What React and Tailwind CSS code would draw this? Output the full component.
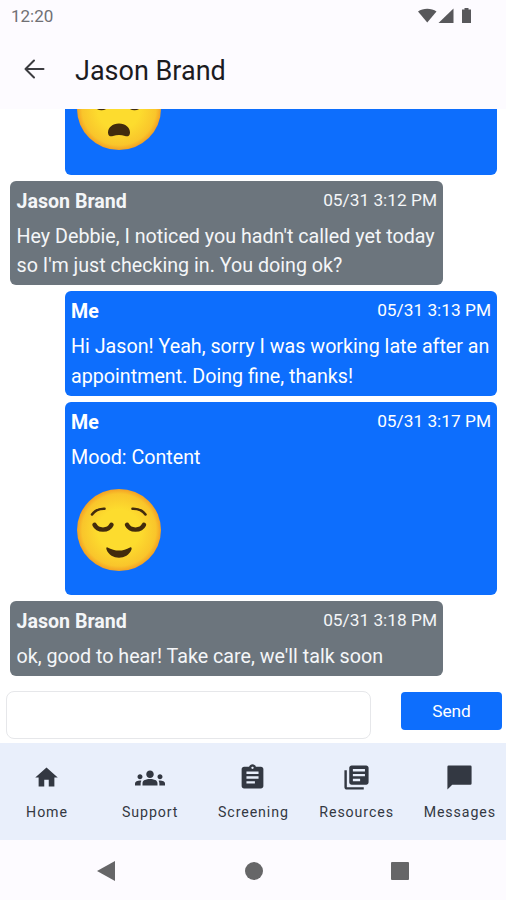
import React from 'react'
import { MdHome, MdGroups, MdAssignment, MdLibraryBooks } from 'react-icons/md'

const MESSAGES = [
  { id: 2, from: 'Jason Brand', time: '05/31 3:12 PM', lines: ["Hey Debbie, I noticed you hadn't called yet today", "so I'm just checking in. You doing ok?"] },
  { id: 3, from: 'Me', time: '05/31 3:13 PM', lines: ['Hi Jason! Yeah, sorry I was working late after an', 'appointment. Doing fine, thanks!'] },
  { id: 4, from: 'Me', time: '05/31 3:17 PM', lines: ['Mood: Content'], mood: true },
  { id: 5, from: 'Jason Brand', time: '05/31 3:18 PM', lines: ["ok, good to hear! Take care, we'll talk soon"] }
]

// Speech bubble with tight corners
function ChatIcon({ className }) {
  return (
    <svg className={className} viewBox="0 0 24 24" fill="currentColor">
      <path d="M3 2h18a1 1 0 0 1 1 1v14a1 1 0 0 1-1 1H6l-4 4V3a1 1 0 0 1 1-1z" />
    </svg>
  )
}

const TABS = [
  { label: 'Home', Icon: MdHome, size: 'size-[27px]' },
  { label: 'Support', Icon: MdGroups, size: 'size-[30px]' },
  { label: 'Screening', Icon: MdAssignment, size: 'size-[29px]' },
  { label: 'Resources', Icon: MdLibraryBooks, size: 'size-[29px]' },
  { label: 'Messages', Icon: ChatIcon, size: 'size-[29px]' }
]

// Shared shading for the emoji faces
function FaceGradient({ id }) {
  return (
    <defs>
      <radialGradient id={id} cx="50%" cy="50%" r="50%">
        <stop offset="0.5" stopColor="#fddc2e" />
        <stop offset="0.88" stopColor="#f9c52b" />
        <stop offset="1" stopColor="#f3a024" />
      </radialGradient>
    </defs>
  )
}

function ContentFace() {
  return (
    <svg className="h-[84px] w-[86px] shrink-0" viewBox="0 0 86 84" fill="none">
      <FaceGradient id="content-face" />
      <ellipse cx="43" cy="42" rx="42" ry="41" fill="url(#content-face)" />
      <g stroke="#422b0d" strokeLinecap="round">
        <path d="M16 26.5C19 22.5 23 20.6 28.5 20.8" strokeWidth="2.6" />
        <path d="M56.5 20.8C62 20.6 66.5 22.5 69.5 26.5" strokeWidth="2.6" />
        <path d="M18.5 36.8C21.5 43.2 32.5 43.2 35.5 36.8" strokeWidth="4.4" />
        <path d="M51 36.8C54 43.2 65 43.2 68 36.8" strokeWidth="4.4" />
      </g>
      <path d="M31.5 59.5C39 63.6 47 63.6 54 59.5C55.3 59 56 60 55.5 61.5C51.5 72.5 34.5 72.5 30.5 61.5C30 60 30.5 59 31.5 59.5Z" fill="#422b0d" />
    </svg>
  )
}

function SadFace() {
  return (
    <svg className="h-[84px] w-[86px] shrink-0" viewBox="0 0 86 84" fill="none">
      <FaceGradient id="sad-face" />
      <ellipse cx="43" cy="42" rx="42" ry="41" fill="url(#sad-face)" />
      <g stroke="#422b0d" strokeLinecap="round" strokeWidth="4">
        <path d="M19 37C22 42.6 29 42.6 32 37" />
        <path d="M52 37C55 42.6 62 42.6 65 37" />
      </g>
      <path d="M43 56.5C36.5 56.5 32 60.5 32 65.5C32 69 34.500 70 37 69C41 67.800 45 67.800 49 69C51.500 70 54 69 54 65.500C54 60.500 49.500 56.500 43 56.500Z" fill="#422b0d" />
    </svg>
  )
}

function StatusBar() {
  return (
    <div className="flex h-8 shrink-0 items-center justify-between pl-[11px] pr-[33px] text-[#707074]">
      <span className="pt-px text-[17px]">12:20</span>
      <svg className="h-4 w-[55px]" viewBox="0 0 55 16" fill="#58585b">
        <path d="M0 3.5C5 -0.3 13.5 -0.3 18.5 3.5L9.25 14.5Z" />
        <path d="M35.5 0.5V15H20.5Z" />
        <path d="M46.5 0h4v1.5h2.5v13.5h-9v-13.5h2.5z" />
      </svg>
    </div>
  )
}

function Header() {
  return (
    <header className="flex h-[77px] shrink-0 items-center pb-1">
      <svg className="ml-6 h-5 w-[21px]" viewBox="0 0 21 20" fill="none" stroke="#3c3c40" strokeWidth="2" strokeLinecap="round" strokeLinejoin="round">
        <path d="M10 1.5L1.5 10L10 18.5M1.5 10H19.5" />
      </svg>
      <h1 className="ml-[30px] pt-1 text-[27px] leading-8 text-[#1c1b1f]">Jason Brand</h1>
    </header>
  )
}

function Message({ from, time, lines, mood }) {
  const mine = from === 'Me'
  return (
    <div className={mine ? 'ml-[55px] w-[432px] rounded-md bg-[#0d6efd] p-1.5 text-white' : 'w-[433px] rounded-md bg-[#6c757d] p-1.5 pl-[6.5px] text-[#f4f6f8]'}>
      <div className="flex h-[29px] items-start justify-between">
        <span className="text-[19.6px] font-bold leading-[30px]">{from}</span>
        <span className="text-[17.3px] leading-[26px]">{time}</span>
      </div>
      <div className="mt-[5px] whitespace-nowrap text-[19.7px] leading-[29.4px]">
        {lines.map(line => <p key={line} className="relative top-px">{line}</p>)}
      </div>
      {mood && (
        <div className="h-[117px] pl-[5px] pt-4">
          <ContentFace />
        </div>
      )}
    </div>
  )
}

function TabBar() {
  return (
    <nav className="grid h-[97px] w-[516px] shrink-0 grid-cols-5 bg-[#e9effb]">
      {TABS.map(({ label, Icon, size }) => (
        <div key={label} className="flex w-[93px] flex-col items-center pt-5 text-[#333842]">
          <div className="flex h-[29px] items-center">
            <Icon className={size} />
          </div>
          <span className="mt-2.5 pl-px text-[14.2px] leading-5 tracking-[0.9px]">{label}</span>
        </div>
      ))}
    </nav>
  )
}

export default function App() {
  return (
    <div className="flex h-[900px] w-[506px] flex-col overflow-hidden bg-[#fdfbff] font-['Roboto',sans-serif]">
      <StatusBar />
      <Header />
      <main className="flex h-[568px] shrink-0 flex-col gap-1.5 bg-white pl-2.5">
        <div className="ml-[55px] flex h-[65.5px] w-[432px] shrink-0 flex-col justify-end overflow-hidden rounded-b-md bg-[#0d6efd] pb-6 pl-[11px]">
          <SadFace />
        </div>
        {MESSAGES.map(message => <Message key={message.id} {...message} />)}
      </main>
      <form className="flex h-[66px] shrink-0 items-start bg-white pl-1.5 pt-3.5">
        <input className="h-[48px] w-[365px] rounded-lg border border-[#e6e7ea] bg-white px-3 outline-none" />
        <button type="button" className="ml-[30px] mt-px h-[38px] w-[101px] rounded bg-[#0d6efd] pt-px text-[17.3px] text-white">Send</button>
      </form>
      <TabBar />
      <div className="flex h-[60px] items-center pt-px">
        <svg className="ml-[97px] h-5 w-[18px]" viewBox="0 0 18 20" fill="#666668"><path d="M18 0V20L0 10Z" /></svg>
        <div className="ml-[130px] size-[18px] rounded-full bg-[#666668]" />
        <div className="ml-[128px] size-[18px] rounded-[1px] bg-[#666668]" />
      </div>
    </div>
  )
}
